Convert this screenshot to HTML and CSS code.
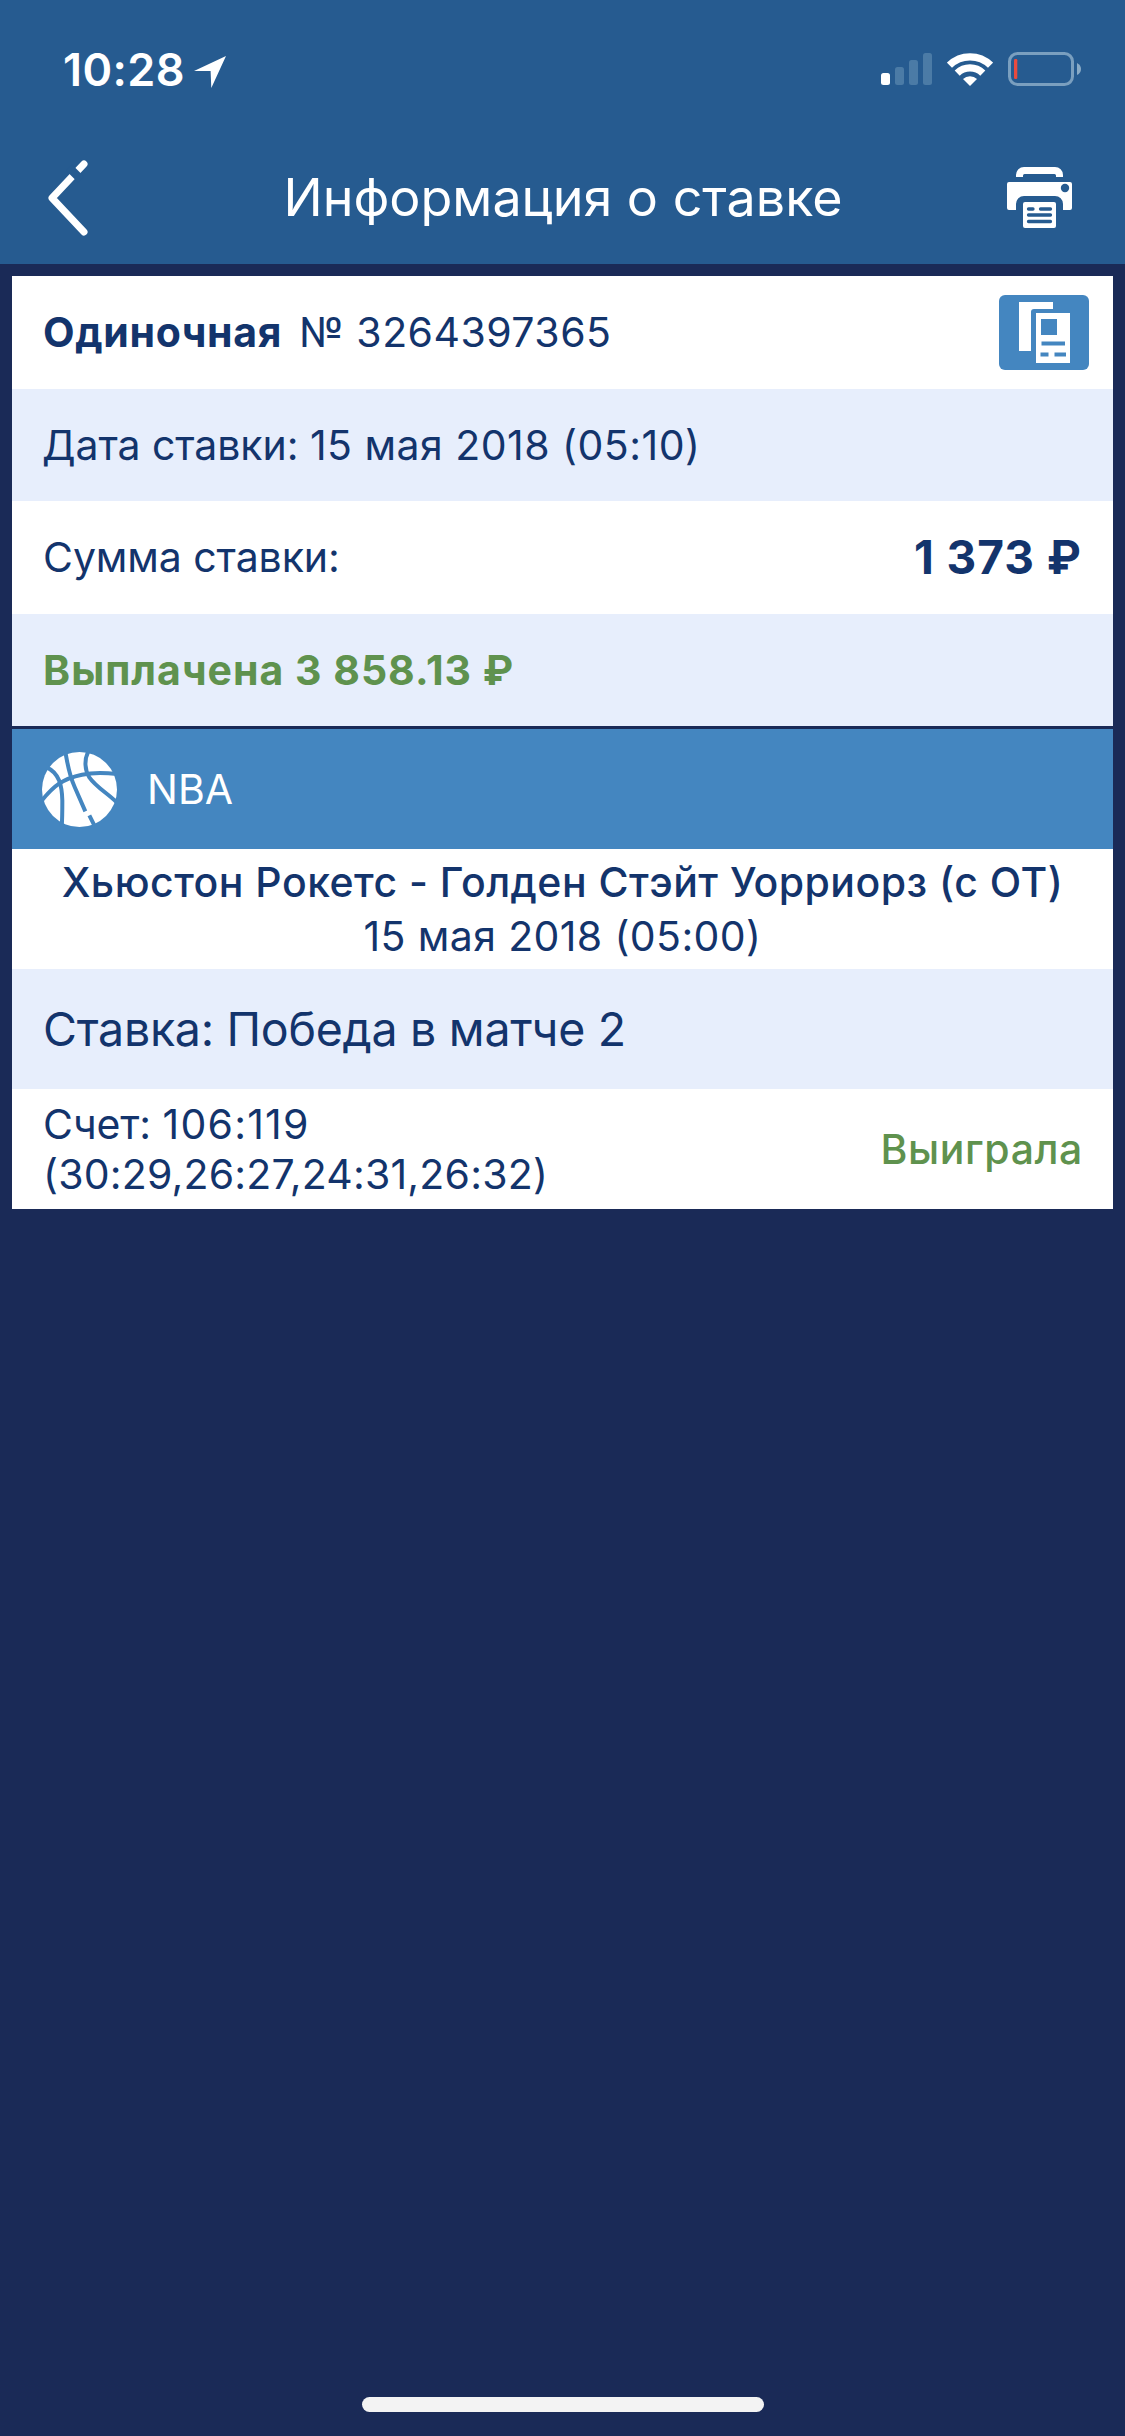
FILE: index.html
```html
<!DOCTYPE html>
<html lang="ru">
<head>
    <meta charset="UTF-8">
    <meta name="viewport" content="width=device-width, initial-scale=1.0">
    <title>Информация о ставке</title>
    <link rel="stylesheet" href="styles.css">
</head>
<body>
    <header class="header">
        <div class="status-bar">
            <span class="time">10:28</span>
            <svg class="location" width="32" height="32" viewBox="0 0 32 32"><path d="M32 0L0 15h16.6l.7 17z" fill="#fff"/></svg>
            <div class="status-icons">
                <svg width="51" height="32" viewBox="0 0 51 32">
                    <rect x="0" y="20" width="9" height="12" rx="2.5" fill="#fff"/>
                    <g fill="#4b7ba6">
                        <rect x="14" y="14" width="9" height="18" rx="2.5"/>
                        <rect x="28" y="7" width="9" height="25" rx="2.5"/>
                        <rect x="42" y="0" width="9" height="32" rx="2.5"/>
                    </g>
                </svg>
                <svg class="wifi" width="46" height="33" viewBox="0 0 46 33">
                    <g fill="none" stroke="#fff" stroke-width="7.2">
                        <path d="M2.5 12.2A29.4 29.4 0 0 1 43.5 12.2"/>
                        <path d="M10.2 20.1A18.3 18.3 0 0 1 35.8 20.1"/>
                    </g>
                    <path d="M23 33L16 26A10 10 0 0 1 30 26z" fill="#fff"/>
                </svg>
                <svg class="battery" width="73" height="34" viewBox="0 0 73 34">
                    <rect x="1.5" y="1.5" width="63" height="31" rx="8" fill="none" stroke="#7a9fbf" stroke-width="3"/>
                    <rect x="6" y="7" width="3.3" height="20" rx="1.2" fill="#ea4b3f"/>
                    <path d="M69 11q4 2 4 6t-4 6z" fill="#8aabc6"/>
                </svg>
            </div>
        </div>
        <nav class="nav-bar">
            <a class="back" href="#">
                <svg width="40" height="76" viewBox="0 0 40 76">
                    <path d="M36 4L4 38l32 34" fill="none" stroke="#fff" stroke-width="7" stroke-linecap="round" stroke-linejoin="round"/>
                    <path d="M21 7.5l12 12" stroke="#265b90" stroke-width="8.5"/>
                </svg>
            </a>
            <h1>Информация о ставке</h1>
            <a class="print" href="#">
                <svg width="65" height="61" viewBox="0 0 65 61">
                    <path d="M9 10V8a8 8 0 0 1 8-8h31a8 8 0 0 1 8 8v2h-7V8.5a1.500 1.500 0 0 0-1.500-1.500h-30a1.500 1.500 0 0 0-1.500 1.500V10z" fill="#fff"/>
                    <path d="M2 15h61a2 2 0 0 1 2 2v24a2 2 0 0 1-2 2h-7v-6a8 8 0 0 0-8-8H17a8 8 0 0 0-8 8v6H2a2 2 0 0 1-2-2V17a2 2 0 0 1 2-2z" fill="#fff"/>
                    <circle cx="58" cy="21" r="4.2" fill="#265b90"/>
                    <rect x="16" y="35" width="33" height="26" rx="2" fill="#fff"/>
                    <path d="M21.5 42H26M33.5 42h10M21.5 48h22M21.5 54.500h22" stroke="#265b90" stroke-width="3.3" stroke-linecap="round"/>
                </svg>
            </a>
        </nav>
    </header>
    <main>
        <section class="bet">
            <div class="row">
                <p><b class="type">Одиночная</b><span class="number">№ 3264397365</span></p>
                <button class="copy">
                    <svg width="51" height="61" viewBox="0 0 51 61">
                        <path d="M0 0h34v7H15q-3 0-3 3v39H0z" fill="#fff"/>
                        <path d="M17 11h34v50H17z" fill="#fff"/>
                        <path d="M22 17h16v16H22zM22.500 39.500h23.500v4H22.500zM21.500 50.500h8v4h-8zM35.500 50.500H47v4H35.500z" fill="#4486c0"/>
                    </svg>
                </button>
            </div>
            <div class="row alt"><p class="date"><span class="label">Дата ставки: </span>15 мая 2018 (05:10)</p></div>
            <div class="row"><span class="label">Сумма ставки:</span><b class="amount">1 373 ₽</b></div>
            <div class="row alt"><b class="paid">Выплачена 3 858.13 ₽</b></div>
        </section>
        <section class="event">
            <div class="league">
                <svg width="75" height="75" viewBox="0 0 225 225">
                    <circle cx="112.5" cy="112.5" r="112.5" fill="#fff"/>
                    <g fill="none" stroke="#4486c0" stroke-width="12">
                        <path d="M-1 146C35 102 62 80 120 68c35-7 70-6 115-1"/>
                        <path d="M70 0c8 40 10 65 28 105l32 73M142 190l21 42"/>
                        <path d="M14 46c38 17 46 55 47 100 0 35 0 55-2 80"/>
                        <path d="M140-4c-15 28-11 60 2 80 20 29 55 48 82 75"/>
                    </g>
                </svg>
                <span class="league-name">NBA</span>
            </div>
            <div class="match">
                <h2>Хьюстон Рокетс - Голден Стэйт Уорриорз (с ОТ)</h2>
                <p class="match-date">15 мая 2018 (05:00)</p>
            </div>
            <div class="outcome alt">Ставка: Победа в матче 2</div>
            <div class="result">
                <div>
                    <p class="score"><span class="label">Счет: </span>106:119</p>
                    <p class="periods">(30:29,26:27,24:31,26:32)</p>
                </div>
                <span class="won">Выиграла</span>
            </div>
        </section>
    </main>
    <div class="home-indicator"></div>
</body>
</html>
```
FILE: styles.css
```css
* {
    box-sizing: border-box;
}

body {
    margin: 0;
    min-height: 2436px;
    display: flex;
    flex-direction: column;
    font-family: Inter, 'Liberation Sans', sans-serif;
    font-size: 41px;
    color: #13346c;
    background-color: #1a2a57;
}

h1, h2, p {
    margin: 0;
    font-weight: 400;
}

svg {
    display: block;
    flex: none;
}

/* Header */
.header {
    height: 264px;
    color: #fff;
    background: #265b90;
}

.status-bar {
    display: flex;
    align-items: center;
    height: 138px;
    padding: 0 44px 0 63px;
}

.time {
    font-size: 45px;
    font-weight: 600;
    letter-spacing: 0.4px;
}

.location {
    margin: 6px 0 0 9px;
}

.status-icons {
    display: flex;
    align-items: center;
    margin-left: auto;
}

.wifi {
    margin-left: 15px;
}

.battery {
    margin-left: 15px;
}

.nav-bar {
    display: flex;
    align-items: center;
    justify-content: space-between;
    height: 119px;
    padding: 0 53px 0 48px;
}

h1 {
    margin-left: 31px;
    font-size: 52px;
}

/* Bet info */
main {
    margin: 12px 12px 0;
}

.row {
    display: flex;
    align-items: center;
    justify-content: space-between;
    height: 112.5px;
    padding: 0 31px;
    background: #fff;
}

.row.alt, .outcome.alt {
    background: #e7eefc;
}

.label {
    letter-spacing: -0.07px;
}

.type {
    letter-spacing: 0.65px;
}

.number {
    margin-left: 17px;
    letter-spacing: 0.47px;
}

.copy {
    width: 90px;
    height: 75px;
    margin-right: -7px;
    padding: 0 20px;
    border: none;
    border-radius: 6px;
    background: #4486c0;
}

.date {
    margin-left: -1px;
    letter-spacing: 0.48px;
}

.amount {
    font-size: 46px;
    letter-spacing: 1px;
}

.paid {
    color: #5f924e;
    letter-spacing: 1px;
}

/* Event */
.event {
    margin-top: 3px;
}

.league {
    display: flex;
    align-items: center;
    height: 120px;
    padding: 0 30px;
    color: #fff;
    background: #4486c0;
}

.league-name {
    margin-left: 30px;
}

.match {
    height: 120px;
    padding-top: 6px;
    text-align: center;
    line-height: 54px;
    background: #fff;
}

h2 {
    font-size: 41px;
    font-weight: 500;
    letter-spacing: 0.48px;
}

.match-date {
    letter-spacing: 0.38px;
}

.outcome {
    display: flex;
    align-items: center;
    height: 120px;
    padding: 0 31px;
    font-size: 46.5px;
    letter-spacing: -0.28px;
}

.result {
    display: flex;
    align-items: center;
    justify-content: space-between;
    height: 120px;
    padding: 0 31px;
    line-height: 50px;
    background: #fff;
}

.score {
    letter-spacing: 1.2px;
}

.periods {
    letter-spacing: 0.19px;
}

.won {
    margin-right: -1px;
    color: #5f924e;
    font-weight: 500;
    letter-spacing: 0.6px;
}

.home-indicator {
    width: 402px;
    height: 15px;
    margin: auto auto 24px;
    border-radius: 8px;
    background: #f3f3f3;
}
```
